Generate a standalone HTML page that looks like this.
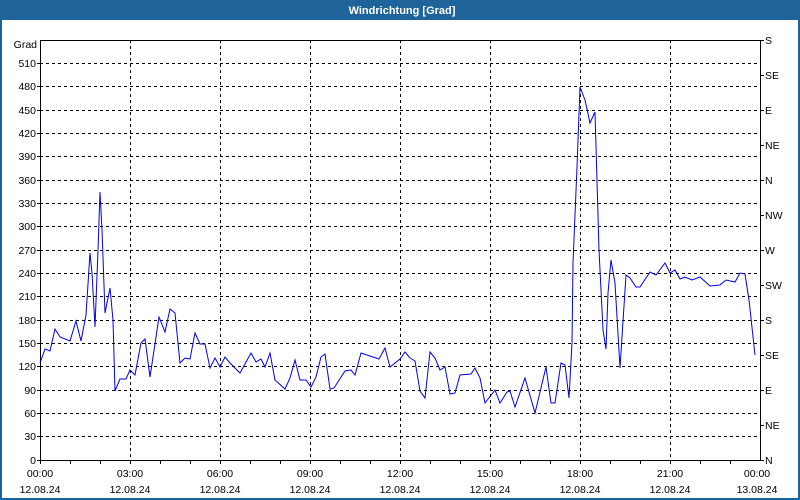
<!DOCTYPE html>
<html><head><meta charset="utf-8"><style>
html,body{margin:0;padding:0;background:#fff;}
body{width:800px;height:500px;overflow:hidden;position:relative;}
</style></head><body>
<svg width="800" height="500" xmlns="http://www.w3.org/2000/svg" style="position:absolute;left:0;top:0;font-family:'Liberation Sans',sans-serif;font-size:10.5px">
<rect x="0" y="0" width="800" height="500" fill="#fff"/>
<rect x="0" y="0" width="800" height="20" fill="#1e6399"/>
<rect x="0" y="0" width="2" height="500" fill="#1e6399"/>
<rect x="798" y="0" width="2" height="500" fill="#1e6399"/>
<rect x="0" y="498" width="800" height="2" fill="#1e6399"/>
<text x="402" y="14" text-anchor="middle" fill="#fff" font-weight="bold" font-size="11">Windrichtung [Grad]</text>
<g stroke="#000" stroke-width="1" stroke-dasharray="3,3" shape-rendering="crispEdges">
<line x1="40" x2="760" y1="63.5" y2="63.5"/><line x1="40" x2="760" y1="86.5" y2="86.5"/><line x1="40" x2="760" y1="110.5" y2="110.5"/><line x1="40" x2="760" y1="133.5" y2="133.5"/><line x1="40" x2="760" y1="156.5" y2="156.5"/><line x1="40" x2="760" y1="180.5" y2="180.5"/><line x1="40" x2="760" y1="203.5" y2="203.5"/><line x1="40" x2="760" y1="226.5" y2="226.5"/><line x1="40" x2="760" y1="250.5" y2="250.5"/><line x1="40" x2="760" y1="273.5" y2="273.5"/><line x1="40" x2="760" y1="296.5" y2="296.5"/><line x1="40" x2="760" y1="320.5" y2="320.5"/><line x1="40" x2="760" y1="343.5" y2="343.5"/><line x1="40" x2="760" y1="366.5" y2="366.5"/><line x1="40" x2="760" y1="390.5" y2="390.5"/><line x1="40" x2="760" y1="413.5" y2="413.5"/><line x1="40" x2="760" y1="436.5" y2="436.5"/>
<line y1="40" y2="460" x1="130.5" x2="130.5"/><line y1="40" y2="460" x1="220.5" x2="220.5"/><line y1="40" y2="460" x1="310.5" x2="310.5"/><line y1="40" y2="460" x1="400.5" x2="400.5"/><line y1="40" y2="460" x1="490.5" x2="490.5"/><line y1="40" y2="460" x1="580.5" x2="580.5"/><line y1="40" y2="460" x1="670.5" x2="670.5"/>
</g>
<g stroke="#000" stroke-width="1" shape-rendering="crispEdges" fill="none">
<path d="M40.5 40.5H760.5V460.5H40.5Z"/>
<path d="M40.5 460v4M70.5 460v4M100.5 460v4M130.5 460v4M160.5 460v4M190.5 460v4M220.5 460v4M250.5 460v4M280.5 460v4M310.5 460v4M340.5 460v4M370.5 460v4M400.5 460v4M430.5 460v4M460.5 460v4M490.5 460v4M520.5 460v4M550.5 460v4M580.5 460v4M610.5 460v4M640.5 460v4M670.5 460v4M700.5 460v4M730.5 460v4"/>
<path d="M37 460.5h4M37 436.5h4M37 413.5h4M37 390.5h4M37 366.5h4M37 343.5h4M37 320.5h4M37 296.5h4M37 273.5h4M37 250.5h4M37 226.5h4M37 203.5h4M37 180.5h4M37 156.5h4M37 133.5h4M37 110.5h4M37 86.5h4M37 63.5h4"/>
<path d="M760 40.5h4M760 75.5h4M760 110.5h4M760 145.5h4M760 180.5h4M760 215.5h4M760 250.5h4M760 285.5h4M760 320.5h4M760 355.5h4M760 390.5h4M760 425.5h4M760 460.5h4"/>
</g>
<g fill="#000" text-anchor="end">
<text x="37" y="48">Grad</text>
<text x="36" y="67">510</text><text x="36" y="90">480</text><text x="36" y="114">450</text><text x="36" y="137">420</text><text x="36" y="160">390</text><text x="36" y="184">360</text><text x="36" y="207">330</text><text x="36" y="230">300</text><text x="36" y="254">270</text><text x="36" y="277">240</text><text x="36" y="300">210</text><text x="36" y="324">180</text><text x="36" y="347">150</text><text x="36" y="370">120</text><text x="36" y="394">90</text><text x="36" y="417">60</text><text x="36" y="440">30</text><text x="36" y="464">0</text>
</g>
<g fill="#000">
<text x="765" y="44">S</text><text x="765" y="79">SE</text><text x="765" y="114">E</text><text x="765" y="149">NE</text><text x="765" y="184">N</text><text x="765" y="219">NW</text><text x="765" y="254">W</text><text x="765" y="289">SW</text><text x="765" y="324">S</text><text x="765" y="359">SE</text><text x="765" y="394">E</text><text x="765" y="429">NE</text><text x="765" y="464">N</text>
</g>
<g fill="#000" text-anchor="middle">
<text x="40" y="477">00:00</text><text x="130" y="477">03:00</text><text x="220" y="477">06:00</text><text x="310" y="477">09:00</text><text x="400" y="477">12:00</text><text x="490" y="477">15:00</text><text x="580" y="477">18:00</text><text x="670" y="477">21:00</text><text x="757" y="477">00:00</text>
<text x="40" y="493">12.08.24</text><text x="130" y="493">12.08.24</text><text x="220" y="493">12.08.24</text><text x="310" y="493">12.08.24</text><text x="400" y="493">12.08.24</text><text x="490" y="493">12.08.24</text><text x="580" y="493">12.08.24</text><text x="670" y="493">12.08.24</text><text x="757" y="493">13.08.24</text>
</g>
<polyline fill="none" stroke="#0000ee" stroke-width="1" points="40,363 45,349 50,351 55,329 60,337 70,341 76,321 81,341 86,315 90,253 92,273 95,327 98,250 100,192 102,230 105,313 110,288 113,320 115,391 120,379 126,379 130,370 135,375 141,343 145,339 150,377 159,317 165,332 170,309 175,313 180,363 185,358 190,359 195,333 200,344 205,344 210,368 215,358 220,367 225,357 230,363 240,373 251,353 256,362 261,359 265,367 270,353 275,380 285,389 290,378 295,360 300,380 306,380 311,387 316,377 321,357 325,354 330,389 334,388 345,371 351,370 355,375 361,353 373,357 379,359 385,348 390,367 400,359 405,352 410,358 415,361 420,391 425,398 430,352 435,358 440,370 445,367 450,394 455,393 460,375 471,374 475,368 480,378 485,403 495,390 500,403 507,392 510,391 515,407 525,378 535,413 546,367 551,403 555,403 561,363 565,365 569,398 572,343 573,263 577,167 580,87 585,100 590,123 595,112 599,250 603,330 606,349 608,293 611,260 615,283 620,368 626,275 630,278 636,287 640,287 650,272 656,275 665,263 670,273 675,270 680,279 685,277 692,280 700,277 710,286 720,285 726,280 735,282 740,273 745,274 749,300 755,355"/>
</svg>
</body></html>
